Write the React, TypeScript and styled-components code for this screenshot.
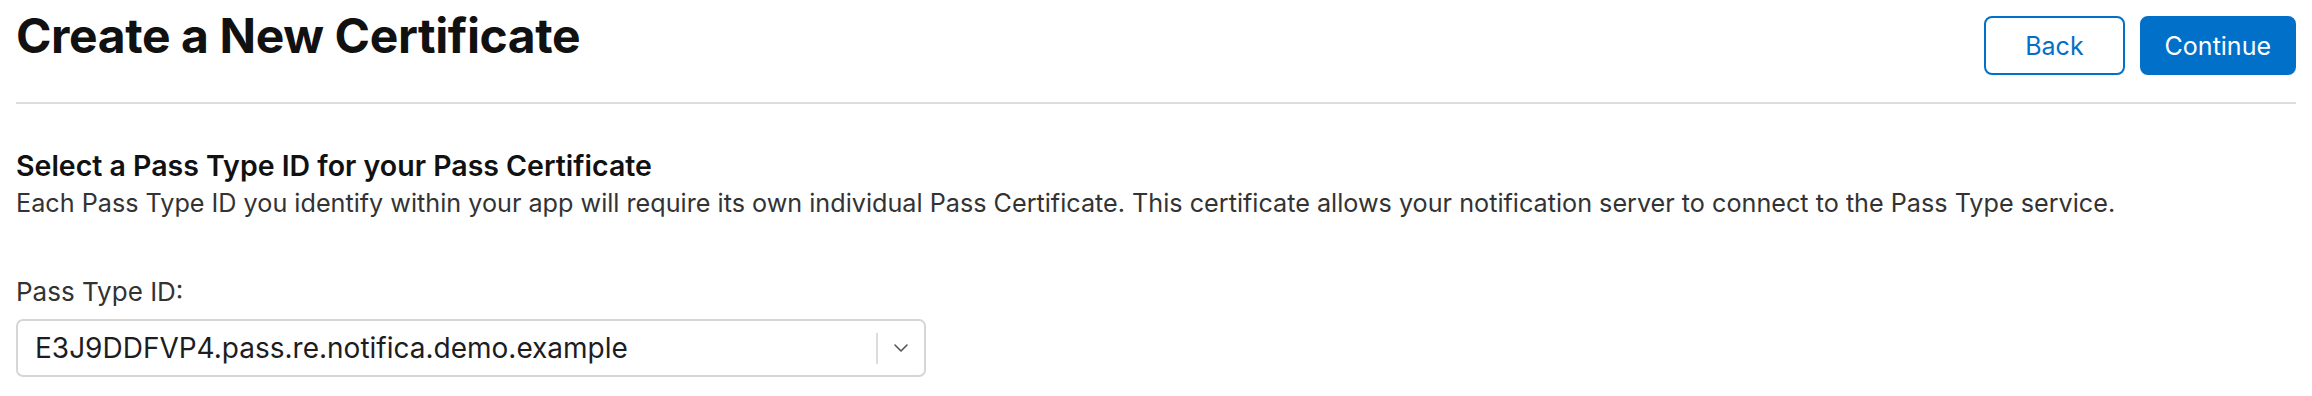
import styled, { createGlobalStyle } from "styled-components";

const GlobalStyle = createGlobalStyle`
    html, body {
        margin: 0;
        padding: 0;
        background: #fff;
    }
    body {
        font-family: Inter, "Noto Sans", "Liberation Sans", sans-serif;
        color: #1d1d1f;
        -webkit-font-smoothing: antialiased;
    }
`;

const Page = styled.div`
    padding: 0 16px;
    width: 2280px;
`;

const Header = styled.div`
    display: flex;
    justify-content: space-between;
    align-items: flex-start;
    padding-top: 8px;
    padding-bottom: 27px;
    border-bottom: 2px solid #dcdcdc;
`;

const Title = styled.h1`
    margin: 0;
    font-size: 48px;
    line-height: 56px;
    font-weight: 700;
    letter-spacing: -0.4px;
    color: #111;
`;

const Actions = styled.div`
    display: flex;
    gap: 15px;
    padding-top: 8px;
`;

const Button = styled.button<{ $primary?: boolean }>`
    height: 59px;
    box-sizing: border-box;
    padding: 0 ${(p) => (p.$primary ? "23px" : "39px")};
    border-radius: 8px;
    border: 2px solid #0070c9;
    background: ${(p) => (p.$primary ? "#0070c9" : "#fff")};
    color: ${(p) => (p.$primary ? "#fff" : "#0070c9")};
    font-family: inherit;
    font-size: 25px;
    font-weight: 400;
    cursor: pointer;
`;

const Section = styled.div`
    padding-top: 45px;
`;

const Heading = styled.h2`
    margin: 0;
    font-size: 28.5px;
    line-height: 34px;
    font-weight: 600;
    color: #111;
`;

const Description = styled.p`
    margin: 5px 0 0;
    font-size: 25.2px;
    line-height: 30px;
    color: #333;
`;

const Field = styled.div`
    margin-top: 59px;
    display: flex;
    flex-direction: column;
    gap: 12px;
`;

const Label = styled.label`
    font-size: 26px;
    line-height: 30px;
    color: #333;
`;

const Select = styled.div`
    width: 910px;
    height: 58px;
    box-sizing: border-box;
    border: 2px solid #d6d6d6;
    border-radius: 7px;
    display: flex;
    align-items: center;
    padding-left: 17px;
    cursor: pointer;
`;

const Value = styled.span`
    flex: 1;
    font-size: 28px;
    color: #1d1d1f;
`;

const Separator = styled.span`
    width: 2px;
    height: 31px;
    background: #dcdcdc;
`;

const Chevron = styled.span`
    width: 46px;
    display: flex;
    justify-content: center;
    align-items: center;
    color: #555;
`;

export default function App() {
    return (
        <>
            <GlobalStyle />
            <Page>
                <Header>
                    <Title>Create a New Certificate</Title>
                    <Actions>
                        <Button>Back</Button>
                        <Button $primary>Continue</Button>
                    </Actions>
                </Header>
                <Section>
                    <Heading>Select a Pass Type ID for your Pass Certificate</Heading>
                    <Description>
                        Each Pass Type ID you identify within your app will require its own individual
                        Pass Certificate. This certificate allows your notification server to connect to
                        the Pass Type service.
                    </Description>
                    <Field>
                        <Label>Pass Type ID:</Label>
                        <Select>
                            <Value>E3J9DDFVP4.pass.re.notifica.demo.example</Value>
                            <Separator />
                            <Chevron>
                                <svg width="14" height="8" viewBox="0 0 14 8" fill="none">
                                    <path
                                        d="M1 1l6 6 6-6"
                                        stroke="currentColor"
                                        strokeWidth="1.6"
                                        strokeLinecap="round"
                                        strokeLinejoin="round"
                                    />
                                </svg>
                            </Chevron>
                        </Select>
                    </Field>
                </Section>
            </Page>
        </>
    );
}
